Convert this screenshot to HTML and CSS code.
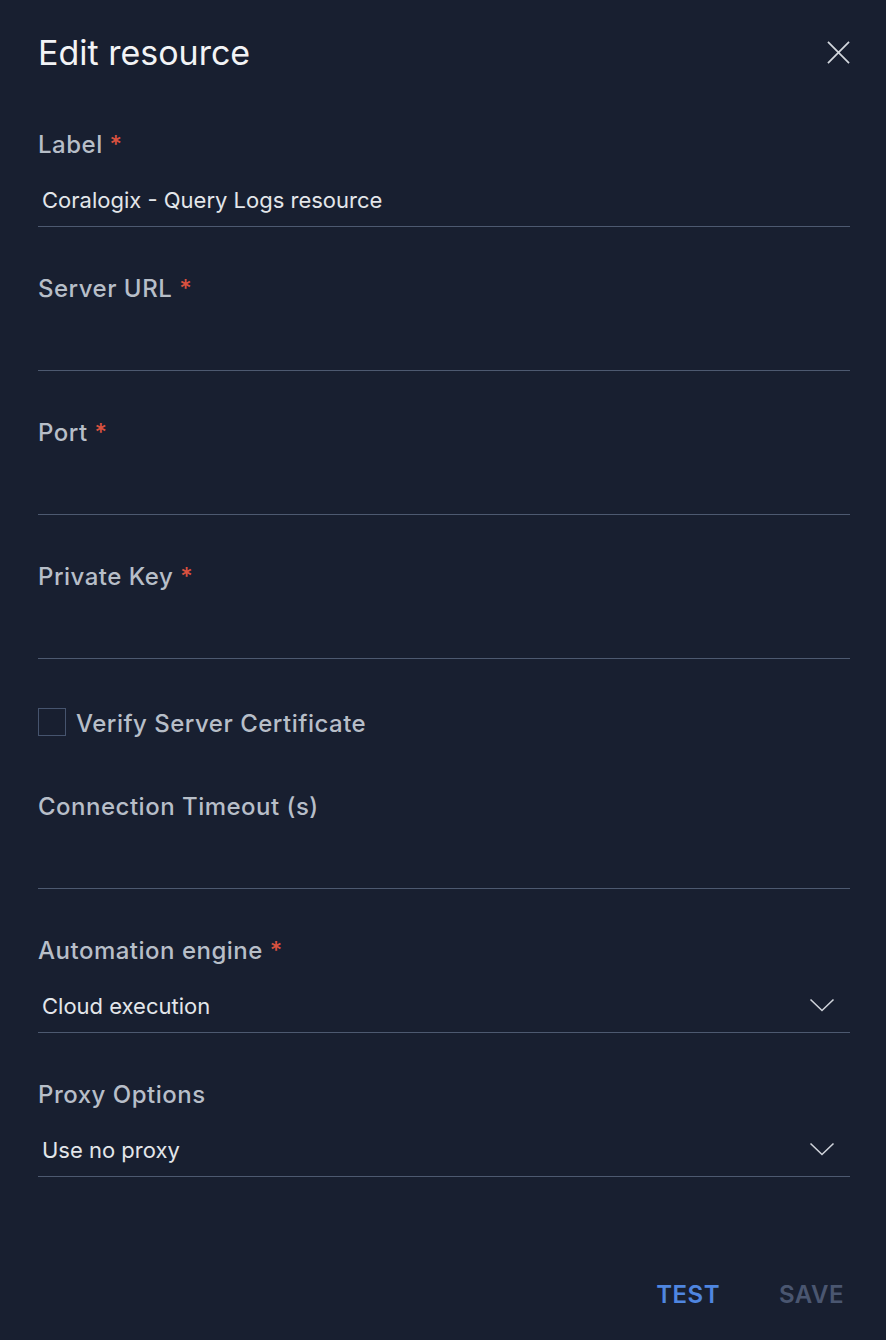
FILE: index.html
```html
<!DOCTYPE html>
<html>
<head>
<meta charset="utf-8">
<link rel="stylesheet" href="styles.css">
</head>
<body>
<div class="panel">
  <header class="head">
    <h1 class="title">Edit resource</h1>
    <button class="close" aria-label="Close">
      <svg width="24" height="24" viewBox="0 0 24 24"><path d="M1 1 L23 23 M23 1 L1 23" stroke="#d3d7dd" stroke-width="1.8" fill="none"/></svg>
    </button>
  </header>

  <div class="field first">
    <div class="label">Label <span class="req">*</span></div>
    <div class="input">Coralogix - Query Logs resource</div>
  </div>
  <div class="field">
    <div class="label">Server URL <span class="req">*</span></div>
    <div class="input"></div>
  </div>
  <div class="field">
    <div class="label">Port <span class="req">*</span></div>
    <div class="input"></div>
  </div>
  <div class="field">
    <div class="label">Private Key <span class="req">*</span></div>
    <div class="input"></div>
  </div>

  <label class="check">
    <span class="box"></span>
    <span class="check-text">Verify Server Certificate</span>
  </label>

  <div class="field after-check">
    <div class="label">Connection Timeout (s)</div>
    <div class="input"></div>
  </div>
  <div class="field">
    <div class="label">Automation engine <span class="req">*</span></div>
    <div class="input select"><span>Cloud execution</span>
      <svg class="chev" width="26" height="14" viewBox="0 0 26 14"><path d="M1.5 1.5 L13 12.5 L24.5 1.5" stroke="#cfd3da" stroke-width="1.6" fill="none"/></svg>
    </div>
  </div>
  <div class="field">
    <div class="label">Proxy Options</div>
    <div class="input select"><span>Use no proxy</span>
      <svg class="chev" width="26" height="14" viewBox="0 0 26 14"><path d="M1.5 1.5 L13 12.5 L24.5 1.5" stroke="#cfd3da" stroke-width="1.6" fill="none"/></svg>
    </div>
  </div>

  <footer class="actions">
    <button class="btn test">TEST</button>
    <button class="btn save">SAVE</button>
  </footer>
</div>
</body>
</html>
```

FILE: styles.css
```css
html, body {
  margin: 0;
  padding: 0;
  background: #181f30;
  height: 100%;
}
body {
  font-family: Inter, Lato, sans-serif;
  color: #e3e6ea;
}
.panel {
  padding: 0 36px 0 38px;
  box-sizing: border-box;
  width: 886px;
  height: 1340px;
  display: flex;
  flex-direction: column;
}
.head {
  display: flex;
  justify-content: space-between;
  align-items: flex-start;
  height: 129px;
}
.title {
  margin: 30px 0 0 0;
  font-size: 34px;
  font-weight: 400;
  line-height: 46px;
  color: #f2f3f5;
  letter-spacing: 0;
}
.close {
  background: none;
  border: none;
  padding: 0;
  margin: 41px 0 0 0;
  width: 23px;
  height: 23px;
  cursor: pointer;
}
.close svg { display: block; width: 23px; height: 23px; }
.field {
  display: flex;
  flex-direction: column;
  margin-top: 46px;
}
.field.first { margin-top: 0; }
.field.after-check { margin-top: 55px; }
.label {
  font-size: 24px;
  line-height: 30px;
  font-weight: 500;
  color: #b7bec8;
  letter-spacing: 0.5px;
  padding-top: 1px;
  height: 29px;
}
.req {
  color: #d9513f;
  margin-left: 0;
}
.input {
  height: 52px;
  padding-top: 15px;
  padding-left: 4px;
  line-height: 52px;
  font-size: 22px;
  color: #e3e6ea;
  border-bottom: 1px solid #4d5970;
}
.select {
  display: flex;
  justify-content: space-between;
  align-items: center;
}
.chev { margin-right: 15px; margin-top: -3px; display: block; }
.check {
  display: flex;
  align-items: center;
  margin-top: 49px;
  height: 28px;
}
.box {
  width: 26px;
  height: 26px;
  border: 1px solid #46546e;
  box-sizing: content-box;
}
.check-text {
  margin-left: 10px;
  margin-top: 2px;
  font-size: 24px;
  font-weight: 500;
  color: #b7bec8;
  letter-spacing: 0.5px;
}
.actions {
  margin-top: auto;
  display: flex;
  justify-content: flex-end;
  gap: 59px;
  padding-bottom: 30px;
  padding-right: 6px;
}
.btn {
  background: none;
  border: none;
  padding: 0;
  font-family: Inter, Lato, sans-serif;
  font-size: 24px;
  font-weight: 600;
  line-height: 30px;
  letter-spacing: 0.5px;
}
.test { color: #4f86e0; }
.save { color: #4a5670; }
```
